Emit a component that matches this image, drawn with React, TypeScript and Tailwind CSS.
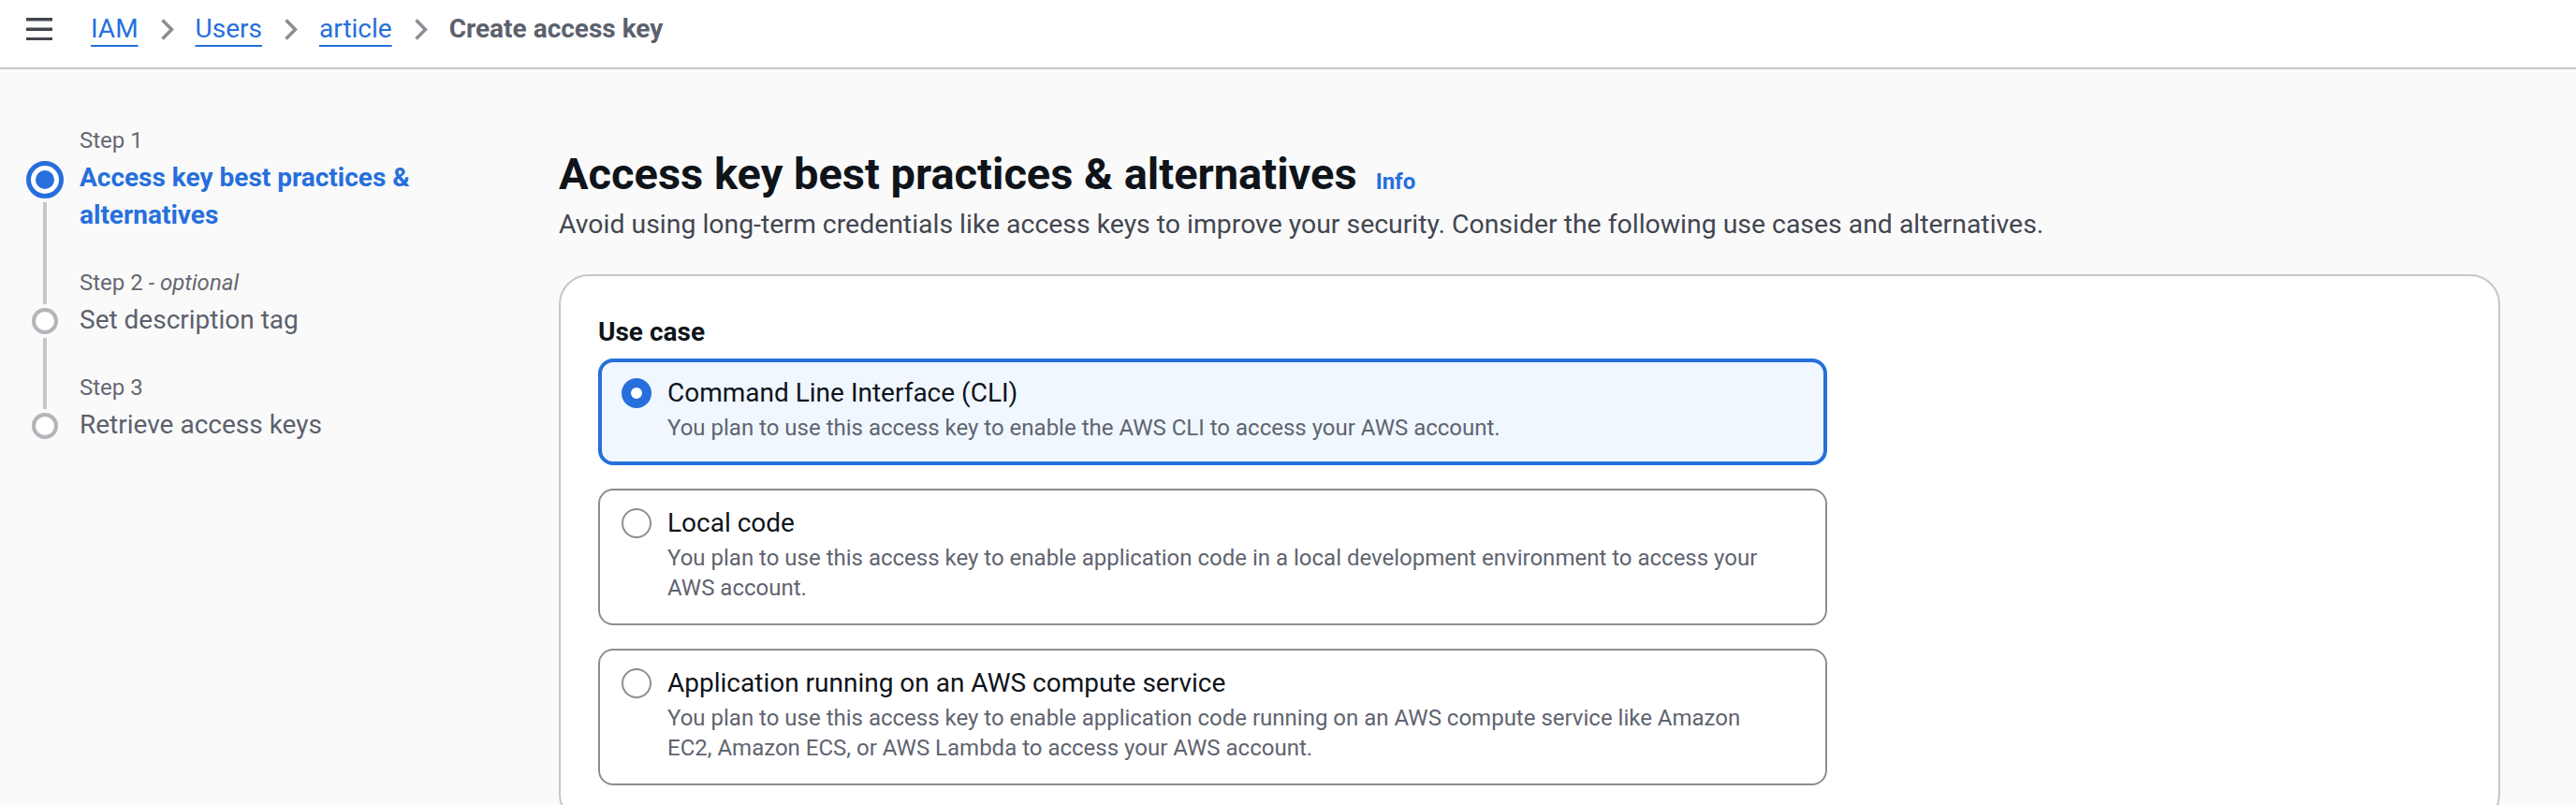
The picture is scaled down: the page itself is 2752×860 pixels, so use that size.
import { Fragment } from 'react'

const crumbs = ['IAM', 'Users', 'article']

const steps = [
  { label: 'Step 1', optional: false, title: 'Access key best practices & alternatives', active: true },
  { label: 'Step 2', optional: true, title: 'Set description tag', active: false },
  { label: 'Step 3', optional: false, title: 'Retrieve access keys', active: false },
]

const useCases = [
  {
    title: 'Command Line Interface (CLI)',
    description: 'You plan to use this access key to enable the AWS CLI to access your AWS account.',
  },
  {
    title: 'Local code',
    description:
      'You plan to use this access key to enable application code in a local development environment to access your AWS account.',
  },
  {
    title: 'Application running on an AWS compute service',
    description:
      'You plan to use this access key to enable application code running on an AWS compute service like Amazon EC2, Amazon ECS, or AWS Lambda to access your AWS account.',
  },
]

function Chevron() {
  return (
    <svg width="15" height="25" viewBox="0 0 15 25" className="mx-[23px] shrink-0">
      <path d="M2.5 2.5 L12.5 12.5 L2.5 22.5" fill="none" stroke="#8c8c94" strokeWidth="3.5" />
    </svg>
  )
}

function Header() {
  return (
    <header className="h-[74px] bg-white border-b-2 border-[#c6c6cd] pb-[10px] pl-[28px] flex items-center">
      <svg width="28" height="24" viewBox="0 0 28 24" className="shrink-0">
        <rect x="0" y="0" width="28" height="3.5" fill="#424650" />
        <rect x="0" y="10.5" width="28" height="3.5" fill="#424650" />
        <rect x="0" y="21" width="28" height="3.5" fill="#424650" />
      </svg>
      <nav className="ml-[41px] flex items-center text-[28px] leading-[40px]">
        {crumbs.map((c) => (
          <Fragment key={c}>
            <a className="text-[#266fdc] underline decoration-2 underline-offset-[8px]">{c}</a>
            <Chevron />
          </Fragment>
        ))}
        <span className="font-bold text-[#5b616d]">Create access key</span>
      </nav>
    </header>
  )
}

function StepNav() {
  return (
    <aside className="w-[597px] shrink-0 pl-[28px] pt-[60px]">
      {steps.map((s, i) => {
        const first = i === 0
        const last = i === steps.length - 1
        return (
          <div key={s.label} className="flex gap-[17px]">
            <div className="w-[40px] flex flex-col items-center">
              {first ? (
                <div className="h-[38px]" />
              ) : (
                <div className="h-[39px] mb-[4px] w-[4px] bg-[#c6c6cd]" />
              )}
              {s.active ? (
                <div className="w-[40px] h-[40px] rounded-full border-[5px] border-[#266fdc] bg-white flex items-center justify-center">
                  <div className="w-[20px] h-[20px] rounded-full bg-[#266fdc]" />
                </div>
              ) : (
                <div className="w-[28px] h-[28px] rounded-full border-4 border-[#b4b4bb] bg-white" />
              )}
              {!last && <div className="flex-1 mt-[4px] w-[4px] bg-[#c6c6cd]" />}
            </div>
            <div className={`w-[380px] ${last ? '' : 'pb-[36px]'}`}>
              <div className="text-[24px] leading-[32px] text-[#656871]">
                {s.label}
                {s.optional && <span className="italic"> - optional</span>}
              </div>
              <div
                className={`mt-[4px] text-[28px] leading-[40px] ${
                  s.active ? 'font-bold text-[#266fdc]' : 'text-[#5b616d]'
                }`}
              >
                {s.title}
              </div>
            </div>
          </div>
        )
      })}
    </aside>
  )
}

function UseCaseTile({ title, description, selected }: { title: string; description: string; selected: boolean }) {
  return (
    <div
      className={
        selected
          ? 'w-[1313px] rounded-[16px] border-4 border-[#266fdc] bg-[#f0f7ff] pl-[21px] pr-[58px] pt-[13px] pb-[20px] flex items-start gap-[17px]'
          : 'w-[1313px] rounded-[16px] border-2 border-[#8c8c94] bg-white pl-[23px] pr-[60px] pt-[15px] pb-[22px] flex items-start gap-[17px]'
      }
    >
      {selected ? (
        <div className="mt-[4px] w-[32px] h-[32px] shrink-0 rounded-full border-[10px] border-[#266fdc] bg-white" />
      ) : (
        <div className="mt-[4px] w-[32px] h-[32px] shrink-0 rounded-full border-2 border-[#8c8c94] bg-white" />
      )}
      <div>
        <div className="text-[28px] leading-[40px] text-[#0f141a]">{title}</div>
        <div className="mt-[1px] text-[24px] leading-[32px] text-[#5f6470]">{description}</div>
      </div>
    </div>
  )
}

export default function App() {
  return (
    <div className="min-h-screen bg-[#fafafa] font-['Roboto',_'Liberation_Sans',_sans-serif]">
      <Header />
      <div className="flex">
        <StepNav />
        <main className="flex-1 pr-[81px] pt-[84px]">
          <div className="flex items-baseline gap-[20px]">
            <h1 className="text-[47px] leading-[56px] font-bold text-[#0f141a]">
              Access key best practices &amp; alternatives
            </h1>
            <a className="text-[24px] font-bold text-[#266fdc]">Info</a>
          </div>
          <p className="mt-[6px] text-[28.4px] leading-[40px] text-[#424650]">
            Avoid using long-term credentials like access keys to improve your security. Consider the following use
            cases and alternatives.
          </p>
          <section className="mt-[33px] rounded-[32px] border-2 border-[#c6c6cd] bg-white px-[40px] pt-[40px] pb-[40px]">
            <div className="text-[28px] leading-[40px] font-bold text-[#0f141a]">Use case</div>
            <div className="mt-[8px] flex flex-col gap-[25px]">
              {useCases.map((u, i) => (
                <UseCaseTile key={u.title} title={u.title} description={u.description} selected={i === 0} />
              ))}
            </div>
          </section>
        </main>
      </div>
    </div>
  )
}
